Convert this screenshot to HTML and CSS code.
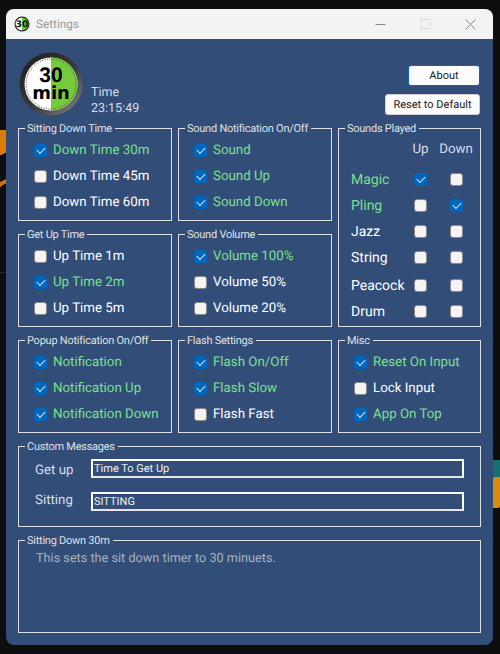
FILE: index.html
```html
<!DOCTYPE html>
<html lang="en">
<head>
    <meta charset="UTF-8">
    <title>Settings</title>
    <link rel="stylesheet" href="styles.css">
</head>
<body>
    <div class="window">
        <div class="titlebar">
            <svg class="app-icon" width="16" height="16" viewBox="0 0 16 16">
                <circle cx="8" cy="8" r="7.5" fill="#111"/>
                <path d="M8 1.5a6.5 6.5 0 0 0 0 13z" fill="#fff"/>
                <path d="M8 1.5a6.5 6.5 0 0 1 0 13z" fill="#6fc72f"/>
                <text x="8" y="11.2" text-anchor="middle" class="app-icon-text">30</text>
            </svg>
            <span class="title">Settings</span>
            <div class="controls">
                <svg width="11" height="11" viewBox="0 0 11 11"><path d="M0.5 5.5h10" stroke="#8a8a8a" fill="none"/></svg>
                <svg width="11" height="11" viewBox="0 0 11 11"><rect x="1" y="0.5" width="9" height="9" stroke="#dcdcdc" fill="none"/></svg>
                <svg width="11" height="11" viewBox="0 0 11 11"><path d="M0.5 0.5l10 10M10.5 0.5l-10 10" stroke="#8a8a8a" fill="none"/></svg>
            </div>
        </div>

        <div class="content">
            <div class="header">
                <svg class="clock" width="64" height="64" viewBox="0 0 64 64">
                    <defs>
                        <linearGradient id="ring" x1="0" y1="0" x2="1" y2="1">
                            <stop offset="0" stop-color="#1c1c1c"/>
                            <stop offset="0.55" stop-color="#3a3a3a"/>
                            <stop offset="1" stop-color="#8a8a8a"/>
                        </linearGradient>
                    </defs>
                    <circle cx="32" cy="32" r="31.5" fill="url(#ring)"/>
                    <circle cx="32" cy="32" r="26.5" fill="#fff"/>
                    <path d="M32 5.5a26.5 26.5 0 0 1 0 53z" fill="#76cb3c"/>
                    <circle cx="32" cy="32" r="25" fill="none" stroke="#444" stroke-width="1" stroke-dasharray="1 1.4"/>
                    <text x="32" y="30" text-anchor="middle" class="clock-num">30</text>
                    <text x="32" y="47" text-anchor="middle" class="clock-min">min</text>
                </svg>
                <div class="time">
                    <div>Time</div>
                    <div>23:15:49</div>
                </div>
                <div class="buttons">
                    <button class="btn btn-about">About</button>
                    <button class="btn btn-reset">Reset to Default</button>
                </div>
            </div>

            <div class="groups">
                <fieldset class="group">
                    <legend>Sitting Down Time</legend>
                    <label class="opt on"><span class="box"></span>Down Time 30m</label>
                    <label class="opt"><span class="box"></span>Down Time 45m</label>
                    <label class="opt"><span class="box"></span>Down Time 60m</label>
                </fieldset>
                <fieldset class="group">
                    <legend>Sound Notification On/Off</legend>
                    <label class="opt on"><span class="box"></span>Sound</label>
                    <label class="opt on"><span class="box"></span>Sound Up</label>
                    <label class="opt on"><span class="box"></span>Sound Down</label>
                </fieldset>
                <fieldset class="group sounds">
                    <legend>Sounds Played</legend>
                    <div class="sound-grid">
                        <span></span><span class="head">Up</span><span class="head">Down</span>
                        <span class="name on">Magic</span><span class="on"><span class="box"></span></span><span><span class="box"></span></span>
                        <span class="name on">Pling</span><span><span class="box"></span></span><span class="on"><span class="box"></span></span>
                        <span class="name">Jazz</span><span><span class="box"></span></span><span><span class="box"></span></span>
                        <span class="name">String</span><span><span class="box"></span></span><span><span class="box"></span></span>
                        <span class="name low">Peacock</span><span class="low"><span class="box"></span></span><span class="low"><span class="box"></span></span>
                        <span class="name low">Drum</span><span class="low"><span class="box"></span></span><span class="low"><span class="box"></span></span>
                    </div>
                </fieldset>

                <fieldset class="group">
                    <legend>Get Up Time</legend>
                    <label class="opt"><span class="box"></span>Up Time 1m</label>
                    <label class="opt on"><span class="box"></span>Up Time 2m</label>
                    <label class="opt"><span class="box"></span>Up Time 5m</label>
                </fieldset>
                <fieldset class="group">
                    <legend>Sound Volume</legend>
                    <label class="opt on"><span class="box"></span>Volume 100%</label>
                    <label class="opt"><span class="box"></span>Volume 50%</label>
                    <label class="opt"><span class="box"></span>Volume 20%</label>
                </fieldset>

                <fieldset class="group">
                    <legend>Popup Notification On/Off</legend>
                    <label class="opt on"><span class="box"></span>Notification</label>
                    <label class="opt on"><span class="box"></span>Notification Up</label>
                    <label class="opt on"><span class="box"></span>Notification Down</label>
                </fieldset>
                <fieldset class="group">
                    <legend>Flash Settings</legend>
                    <label class="opt on"><span class="box"></span>Flash On/Off</label>
                    <label class="opt on"><span class="box"></span>Flash Slow</label>
                    <label class="opt"><span class="box"></span>Flash Fast</label>
                </fieldset>
                <fieldset class="group">
                    <legend>Misc</legend>
                    <label class="opt on"><span class="box"></span>Reset On Input</label>
                    <label class="opt"><span class="box"></span>Lock Input</label>
                    <label class="opt on"><span class="box"></span>App On Top</label>
                </fieldset>

                <fieldset class="group wide messages">
                    <legend>Custom Messages</legend>
                    <div class="msg-row row-getup"><span>Get up</span><input class="msg-input" value="Time To Get Up"></div>
                    <div class="msg-row row-sitting"><span>Sitting</span><input class="msg-input" value="SITTING"></div>
                </fieldset>
                <fieldset class="group wide help">
                    <legend>Sitting Down 30m</legend>
                    <p>This sets the sit down timer to 30 minuets.</p>
                </fieldset>
            </div>
        </div>
    </div>
</body>
</html>
```

FILE: styles.css
```css
:root {
    --blue: #324d78;
    --line: #dfe1e4;
    --green: #7be08c;
    --check: #0067c0;
}
* { box-sizing: border-box; }
html, body { height: 100%; }
body {
    margin: 0;
    padding: 9px 7px 9px 6px;
    font-family: Roboto, "Liberation Sans", Arial, sans-serif;
    text-rendering: geometricPrecision;
    background-color: #0e0e0e;
    background-image:
        linear-gradient(150deg, #d97c0c 0 62%, #0e0e0e 62%),
        linear-gradient(150deg, #0e0e0e 0 35%, #c9720c 35% 62%, #0e0e0e 62%),
        linear-gradient(#2a2a1c, #2a2a1c),
        linear-gradient(172deg, #16706f 0 32%, #d98a12 32% 88%, #0e0e0e 88%);
    background-repeat: no-repeat;
    background-size: 6px 38px, 6px 14px, 6px 1px, 7px 54px;
    background-position: 0 130px, 0 176px, 0 272px, 493px 460px;
}
.window {
    height: 636px;
    border-radius: 8px;
    overflow: hidden;
    background: var(--blue);
    display: flex;
    flex-direction: column;
}
.titlebar {
    height: 30px;
    flex: none;
    background: #f3f3f3;
    display: flex;
    align-items: center;
    padding-left: 8px;
}
.app-icon-text {
    font: bold 9px "DejaVu Sans", sans-serif;
    fill: #111;
}
.title {
    margin-left: 6px;
    font-size: 11.8px;
    color: #9a9a9a;
}
.controls {
    margin-left: auto;
    display: flex;
    gap: 34px;
    padding-right: 17px;
}
.controls svg { display: block; }

.content { padding: 0 12px; }
.header {
    height: 83px;
    display: flex;
}
.clock { margin: 13px 0 0 1px; flex: none; }
.clock-num { font: bold 21px "Liberation Sans", sans-serif; fill: #000; }
.clock-min { font: bold 18px "DejaVu Sans", sans-serif; fill: #000; }
.time {
    margin: 46px 0 0 8px;
    font-size: 12.5px;
    line-height: 16px;
    color: #d5deea;
}
.buttons {
    margin: 26px 1px 0 auto;
    display: flex;
    flex-direction: column;
    align-items: flex-end;
    gap: 8px;
}
.btn {
    height: 21px;
    padding: 0;
    font: 11px Roboto, "Liberation Sans", sans-serif;
    text-rendering: geometricPrecision;
    color: #222;
    background: #fbfbfb;
    border: 1px solid #d0d0d0;
    border-radius: 3px;
}
.btn-about { width: 72px; border: 1px solid var(--check); }
.btn-reset { width: 95px; }

.groups {
    display: grid;
    grid-template-columns: 154px 154px 143px;
    grid-template-rows: 99px 99px 99px 87px 99px;
    gap: 7px 6px;
}
.group {
    margin: 0;
    min-width: 0;
    padding: 2.5px 0 0 15px;
    border: 1px solid var(--line);
}
.group legend {
    margin-left: -9px;
    padding: 0 3px 0 2px;
    height: 13px;
    line-height: 13px;
    font-size: 11px;
    letter-spacing: -0.25px;
    color: var(--line);
    white-space: nowrap;
}
.sounds { grid-column: 3; grid-row: 1 / span 2; padding-left: 12px; }
.sounds legend { margin-left: -6px; }
.wide { grid-column: 1 / -1; }

.opt {
    height: 26px;
    display: flex;
    align-items: center;
    gap: 6px;
    font-size: 13.3px;
    color: #fff;
    white-space: nowrap;
}
.on { color: var(--green); }
.box {
    position: relative;
    display: block;
    width: 13px;
    height: 13px;
    flex: none;
    background: #f4f4f4;
    border: 1px solid #8a8a8a;
    border-radius: 3px;
}
.on > .box {
    background: var(--check);
    border-color: var(--check);
}
.on > .box::after {
    content: "";
    position: absolute;
    left: 2px;
    top: 2px;
    width: 7px;
    height: 4px;
    border-left: 1px solid #dfeaf6;
    border-bottom: 1px solid #dfeaf6;
    transform: rotate(-45deg);
}

.sound-grid {
    display: grid;
    grid-template-columns: 52px 35px 36px;
    grid-template-rows: 29px;
    grid-auto-rows: 26px;
    align-items: center;
    justify-items: center;
    font-size: 14px;
    color: #fff;
}
.sound-grid .head { font-size: 13.3px; color: #d5deea; align-self: start; margin-top: 4px; }
.sound-grid .name { justify-self: start; white-space: nowrap; }
.low { margin-top: 4px; }

.messages { padding-left: 16px; }
.messages legend { margin-left: -10px; }
.msg-row {
    display: flex;
    align-items: center;
    height: 19px;
    font-size: 13.3px;
    color: #d5deea;
}
.msg-row span { width: 56px; flex: none; }
.row-getup { margin-top: 3.5px; }
.row-getup span { margin-top: 4px; }
.row-sitting { margin-top: 14px; }
.row-sitting span { margin-bottom: 3px; }
.msg-input {
    width: 373px;
    height: 19px;
    padding: 0 1px;
    font: 11px Roboto, "Liberation Sans", sans-serif;
    text-rendering: geometricPrecision;
    color: #f0f0f0;
    background: var(--blue);
    border: 2px solid #fff;
    border-bottom-color: #e6e6e6;
    border-radius: 0;
    outline: none;
}
.help p {
    margin: 1.5px 0 0 2px;
    font-size: 12.7px;
    color: #a8b2c0;
}
```
